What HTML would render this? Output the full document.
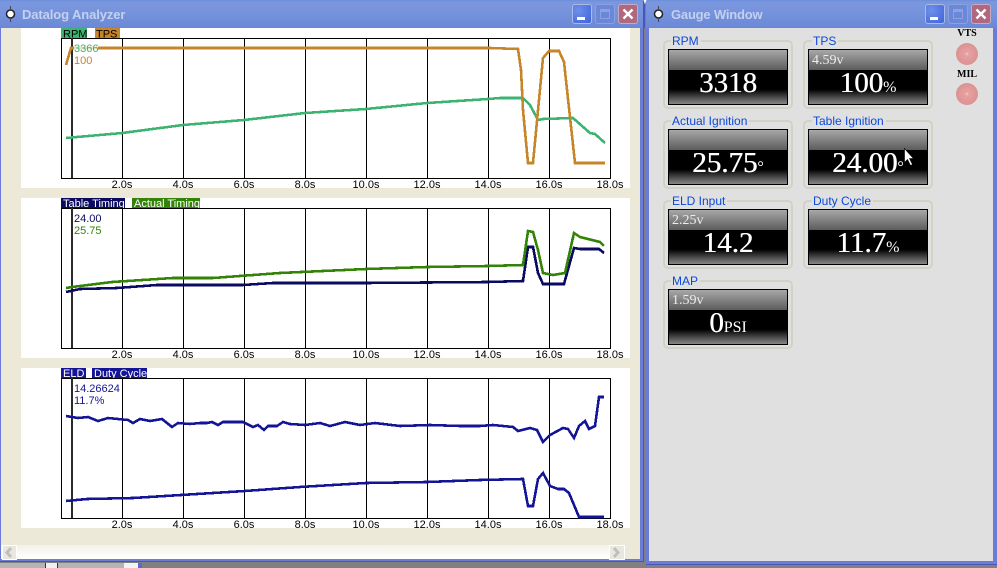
<!DOCTYPE html>
<html><head><meta charset="utf-8"><style>
html,body{margin:0;padding:0;background:#808080}
body{position:relative;width:997px;height:568px;overflow:hidden;font-family:"Liberation Sans",sans-serif}
div{position:absolute;box-sizing:border-box}
.tb{background:linear-gradient(#6a8ddc 0,#7b97de 8%,#7592dc 50%,#6b88d6 100%)}
.title{font:bold 13px "Liberation Sans",sans-serif;letter-spacing:-.1px;color:#c3d0ef;white-space:nowrap;top:7px}
.btn{top:4px;width:20px;height:20px;border:1px solid #a9bce9;border-radius:3px}
.min{background:radial-gradient(circle at 30% 30%,#6f90ea,#3f63d8)}
.max{background:#6a87d8;border-color:#8aa0e0}
.cls{background:#b0687f;border-color:#c6aac0}
.panel{left:21px;width:609px;height:160px;background:#fff}
.grp{width:130px;height:69px;border:2px solid #d2d2c4;border-radius:5px}
.cap{color:#0b49d8;font-size:12px;line-height:14px;background:#e0e0e0;padding:0 2px 0 1px;white-space:nowrap}
.dsp{width:120px;height:56px;border:1px solid #000;background:linear-gradient(#a8a8a8 0,#5c5c5c 37%,#000 37.5%,#000 72%,#000 73%,#888 100%);color:#fff;font-family:"Liberation Serif",serif;overflow:hidden}
.v{left:0;width:118px;text-align:center;top:16px;font-size:29px;line-height:34px;white-space:nowrap;text-shadow:.4px 0 0 #fff}
.v small{font-size:16px;text-shadow:none}
.s{left:3px;top:3px;font-size:14px;line-height:16px;color:#eee}
.led{width:22px;height:22px;border-radius:50%;background:radial-gradient(circle at 50% 50%,#f6d0d0 0,#e8a0a0 12%,#dc9494 60%,#cf9090 100%);left:956px}
.ledt{font:bold 10px "Liberation Serif",serif;color:#000;left:947px;width:40px;text-align:center}
svg polyline{shape-rendering:crispEdges}
</style></head><body>

<!-- Datalog window -->
<div style="left:0;top:0;width:644px;height:562px;background:#6a7bd8;border-bottom:1px solid #4a55b8;border-right:1px solid #4a55b8"></div>
<div class="tb" style="left:0;top:0;width:643px;height:28px"></div>
<div style="left:1px;top:28px;width:639px;height:531px;background:#ece9d8"></div>
<div class="panel" style="top:28px"></div>
<div class="panel" style="top:198px"></div>
<div class="panel" style="top:368px"></div>
<div style="left:1px;top:545px;width:624px;height:14px;background:linear-gradient(#f2f1e8,#fff)"></div>
<div style="left:2px;top:545px;width:15px;height:15px;background:#e8e8e0;border:1px solid #fff"></div>
<div style="left:609px;top:545px;width:16px;height:15px;background:#e8e8e0;border:1px solid #fff"></div>

<div class="title" style="left:22px">Datalog Analyzer</div>
<div class="btn min" style="left:572px"><div style="left:4px;top:12px;width:8px;height:3px;background:#fff"></div></div>
<div class="btn max" style="left:595px"><div style="left:4px;top:4px;width:10px;height:10px;border:1px solid #8ea2e2;border-top-width:3px"></div></div>
<div class="btn cls" style="left:618px"></div>

<!-- Gauge window -->
<div style="left:646px;top:0;width:351px;height:565px;background:#6a7bd8;border-bottom:1px solid #4a55b8"></div>
<div class="tb" style="left:646px;top:0;width:351px;height:28px"></div>
<div style="left:649px;top:28px;width:344px;height:533px;background:#e0e0e0"></div>
<div class="title" style="left:671px;letter-spacing:-.2px">Gauge Window</div>
<div class="btn min" style="left:925px"><div style="left:4px;top:12px;width:8px;height:3px;background:#fff"></div></div>
<div class="btn max" style="left:948px"><div style="left:4px;top:4px;width:10px;height:10px;border:1px solid #8ea2e2;border-top-width:3px"></div></div>
<div class="btn cls" style="left:971px"></div>

<!-- Bottom strip -->
<div style="left:0;top:563px;width:45px;height:5px;background:#b4b4b4"></div>
<div style="left:45px;top:563px;width:13px;height:5px;background:#f0f0f0;border-left:1px solid #335;border-right:1px solid #335"></div>
<div style="left:58px;top:563px;width:66px;height:5px;background:#b4b4b4"></div>
<div style="left:124px;top:563px;width:14px;height:5px;background:#f4f4f4"></div>
<div style="left:138px;top:563px;width:4px;height:5px;background:#5a68d0"></div>

<!-- Gauges -->
<div class="grp" style="left:663px;top:40px"></div><div class="cap" style="left:671px;top:34px">RPM</div>
<div class="dsp" style="left:668px;top:49px"><div class="v">3318</div></div>

<div class="grp" style="left:803px;top:40px"></div><div class="cap" style="left:812px;top:34px">TPS</div>
<div class="dsp" style="left:808px;top:49px"><div class="s">4.59v</div><div class="v">100<small>%</small></div></div>

<div class="grp" style="left:663px;top:120px"></div><div class="cap" style="left:671px;top:114px">Actual Ignition</div>
<div class="dsp" style="left:668px;top:129px"><div class="v">25.75<small>°</small></div></div>

<div class="grp" style="left:803px;top:120px"></div><div class="cap" style="left:812px;top:114px">Table Ignition</div>
<div class="dsp" style="left:808px;top:129px"><div class="v">24.00<small>°</small></div></div>

<div class="grp" style="left:663px;top:200px"></div><div class="cap" style="left:671px;top:194px">ELD Input</div>
<div class="dsp" style="left:668px;top:209px"><div class="s">2.25v</div><div class="v">14.2</div></div>

<div class="grp" style="left:803px;top:200px"></div><div class="cap" style="left:812px;top:194px">Duty Cycle</div>
<div class="dsp" style="left:808px;top:209px"><div class="v">11.7<small>%</small></div></div>

<div class="grp" style="left:663px;top:280px"></div><div class="cap" style="left:671px;top:274px">MAP</div>
<div class="dsp" style="left:668px;top:289px"><div class="s">1.59v</div><div class="v">0<small>PSI</small></div></div>

<div class="ledt" style="top:28px">VTS</div>
<div class="led" style="top:43px"></div>
<div class="ledt" style="top:69px">MIL</div>
<div class="led" style="top:83px"></div>

<svg width="997" height="568" viewBox="0 0 997 568" style="position:absolute;left:0;top:0" font-family="Liberation Sans, sans-serif" font-size="11">
<defs>
<g id="grid" fill="none" stroke="#000" stroke-width="1" shape-rendering="crispEdges">
<rect x="61.5" y=".5" width="549" height="140"/>
<path d="M122.5 0V140M183.5 0V140M244.5 0V140M305.5 0V140M366.5 0V140M427.5 0V140M488.5 0V140M549.5 0V140"/>
<path d="M72 0V140" stroke="#2a2a2a" stroke-width="2"/>
</g>
<g id="ticks" fill="#000" text-anchor="middle" font-size="11">
<text x="122" y="150">2.0s</text><text x="183" y="150">4.0s</text><text x="244" y="150">6.0s</text><text x="305" y="150">8.0s</text><text x="366" y="150">10.0s</text><text x="427" y="150">12.0s</text><text x="488" y="150">14.0s</text><text x="549" y="150">16.0s</text><text x="610" y="150">18.0s</text>
</g>
</defs>

<!-- icons -->
<g fill="#fff" stroke="#222" stroke-width="1.5"><circle cx="10.5" cy="14" r="4"/><circle cx="658.5" cy="14" r="4"/></g>
<path d="M10.5 6v3M10.5 19v3M658.5 6v3M658.5 19v3" stroke="#445" stroke-width="1"/>
<path d="M623.5 9.5l9 9M632.5 9.5l-9 9M976.5 9.5l9 9M985.5 9.5l-9 9" stroke="#fff" stroke-width="2.4"/>
<path d="M643.5 0h3l-1.5 4z" fill="#fff"/><path d="M644.5 4V28" stroke="#4a55b8" stroke-width="1"/>
<path d="M11 548l-4 4.5 4 4.5" fill="none" stroke="#c0c0b8" stroke-width="3"/>
<path d="M614 548l4 4.5-4 4.5" fill="none" stroke="#c0c0b8" stroke-width="3"/>

<!-- panel 1 -->
<g transform="translate(0,38)"><use href="#grid"/><use href="#ticks"/></g>
<rect x="61" y="28" width="26" height="10" fill="#3cb371"/><rect x="95" y="28" width="25" height="10" fill="#c68528"/>
<svg x="61" y="28" width="60" height="10" overflow="hidden"><text x="2" y="9.5" font-size="11" fill="#000">RPM</text><text x="35" y="9.5" font-size="11" fill="#000">TPS</text></svg>
<polyline fill="none" stroke="#3cb371" stroke-width="2.6" points="66,138 122,133 183,125 244,120 305,113 366,109 427,103 488,99 500,98 523,98 530,105 538,120 543,119 573,118 590,133 595,134 605,143"/>
<polyline fill="none" stroke="#c68528" stroke-width="2.6" points="66,65 71,48 490,48 518,49 521,70 523,110 528,163 533,163 543,58 549,51 559,51 564,62 575,163 605,163"/>
<rect x="74" y="44" width="24" height="8" fill="#fff" fill-opacity=".75"/>
<text x="74" y="52" fill="#3cb371">3366</text><text x="74" y="64" fill="#c68528">100</text>

<!-- panel 2 -->
<g transform="translate(0,208)"><use href="#grid"/><use href="#ticks"/></g>
<rect x="61" y="198" width="64" height="10" fill="#0a0a60"/><rect x="132" y="198" width="68" height="10" fill="#338308"/>
<svg x="61" y="198" width="140" height="10"><text x="2" y="9" font-size="11" fill="#fff">Table Timing</text><text x="73" y="9" font-size="11" fill="#fff">Actual Timing</text></svg>
<text x="74" y="222" fill="#0a0a60">24.00</text><text x="74" y="234" fill="#338308">25.75</text>
<polyline fill="none" stroke="#0a0a60" stroke-width="2.6" points="66,292 80,289 117,288 157,285 243,285 273,283 366,283 488,282 523,281 528,247 533,247 538,273 543,284 564,284 574,248 580,249 599,249 604,253"/>
<polyline fill="none" stroke="#338308" stroke-width="2.6" points="66,288 72,287 112,282 173,278 213,278 280,273 366,269 427,267 488,266 523,265 528,231 533,232 538,250 543,273 553,275 565,273 574,233 580,237 600,242 604,246"/>

<!-- panel 3 -->
<g transform="translate(0,378)"><use href="#grid"/><use href="#ticks"/></g>
<rect x="61" y="368" width="25" height="10" fill="#141496"/><rect x="92" y="368" width="55" height="10" fill="#141496"/>
<svg x="61" y="368" width="90" height="10"><text x="2" y="9" font-size="11" fill="#fff">ELD</text><text x="33" y="9" font-size="11" fill="#fff">Duty Cycle</text></svg>
<text x="74" y="392" fill="#141496">14.26624</text><text x="74" y="404" fill="#141496">11.7%</text>
<polyline fill="none" stroke="#141496" stroke-width="2.6" points="66,416 78,418 88,417 98,421 108,418 128,420 133,423 140,419 150,421 162,419 172,427 178,423 190,424 200,423 207,423 212,422 218,425 223,422 243,422 253,427 258,425 264,430 268,426 277,426 283,422 290,424 305,425 320,423 330,426 345,422 360,425 375,423 400,426 430,425 460,426 480,426 493,425 513,427 518,431 530,428 537,430 543,442 550,435 563,428 568,429 574,438 579,426 585,421 589,429 595,426 599,397 604,397"/>
<polyline fill="none" stroke="#141496" stroke-width="2.6" points="66,501 87,499 133,498 213,493 245,491 300,487 366,483 427,482 480,480 523,479 528,506 533,506 538,479 543,473 550,486 558,489 564,489 569,493 579,517 604,517"/>

<!-- mouse cursor -->
<path d="M904.5 148.5v14l3-3 3 6 2-1-3-6h4z" fill="#fff" stroke="#000" stroke-width=".6"/>
</svg>
</body></html>
